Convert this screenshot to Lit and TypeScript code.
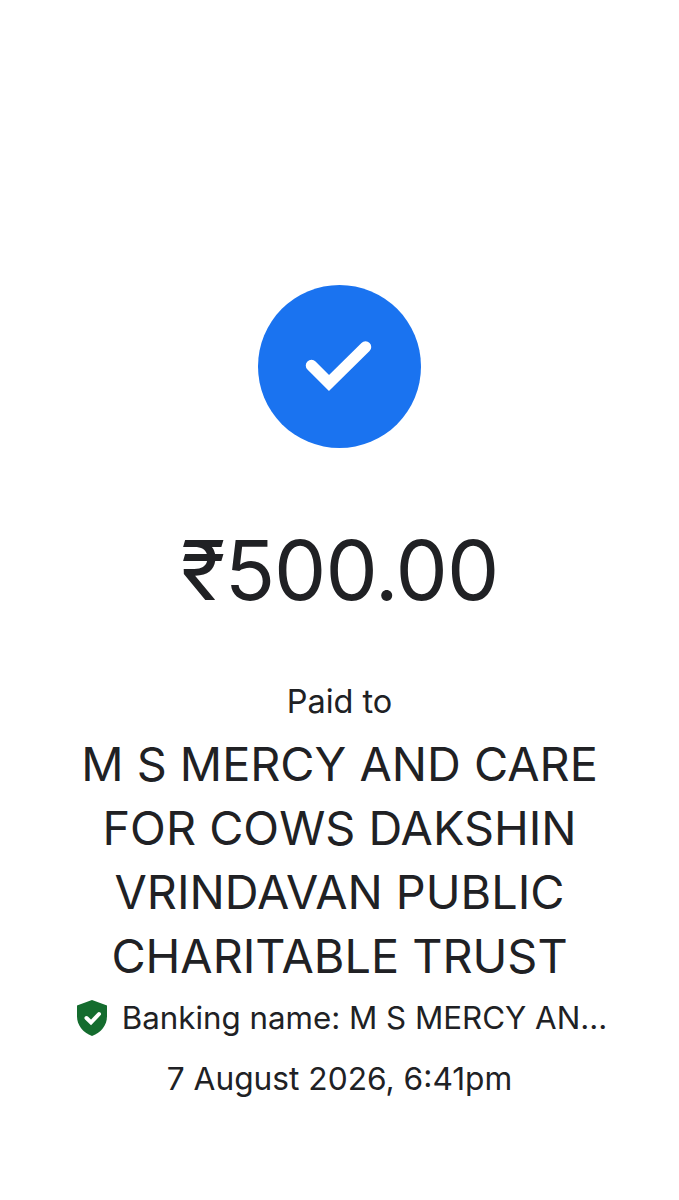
import { LitElement, html, css } from 'lit';
import { customElement } from 'lit/decorators.js';

@customElement('app-root')
export class AppRoot extends LitElement {
  static styles = css`
    :host {
      display: block;
      background: #fff;
      height: 1200px;
      overflow: hidden;
      color: #202124;
      font-family: Inter, 'Noto Sans', sans-serif;
    }
    .page {
      display: flex;
      flex-direction: column;
      align-items: center;
      padding-top: 285px;
    }
    .circle {
      width: 163px;
      height: 163px;
      border-radius: 50%;
      background: #1a73f0;
      display: flex;
    }
    .amount {
      margin-top: 74px;
      font-size: 83px;
      line-height: 96px;
      letter-spacing: -1px;
    }
    .paid {
      margin-top: 62px;
      font-size: 32.5px;
      line-height: 44px;
    }
    .name {
      margin-top: 8px;
      font-size: 46.8px;
      line-height: 64px;
      text-align: center;
      width: 560px;
    }
    .bank {
      display: flex;
      align-items: center;
      gap: 15px;
      margin-top: 8px;
      padding-left: 5px;
      font-size: 31.3px;
      line-height: 44px;
    }
    .date {
      margin-top: 17px;
      font-size: 31.7px;
      line-height: 44px;
    }
  `;

  render() {
    return html`
      <div class="page">
        <div class="circle">
          <svg width="163" height="163" viewBox="0 0 163 163">
            <path d="M53.5 80.5 L71 98 L107.5 62" fill="none" stroke="#fff" stroke-width="11.5" stroke-linecap="round" stroke-linejoin="miter"/>
          </svg>
        </div>
        <div class="amount">₹500.00</div>
        <div class="paid">Paid to</div>
        <div class="name">M S MERCY AND CARE FOR COWS DAKSHIN VRINDAVAN PUBLIC CHARITABLE TRUST</div>
        <div class="bank">
          <svg width="30" height="36" viewBox="0 0 30 36">
            <path d="M15 0 L30 5.5 V16 C30 25.5 24 32.5 15 36 C6 32.5 0 25.5 0 16 V5.5 Z" fill="#146c2e"/>
            <path d="M9.5 18 L14 22.5 L22 14" fill="none" stroke="#fff" stroke-width="4" stroke-linecap="round" stroke-linejoin="miter"/>
          </svg>
          <span>Banking name: M S MERCY AN...</span>
        </div>
        <div class="date">7 August 2026, 6:41pm</div>
      </div>
    `;
  }
}
